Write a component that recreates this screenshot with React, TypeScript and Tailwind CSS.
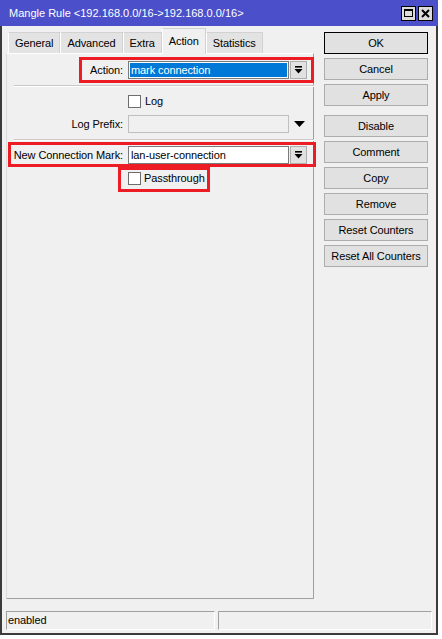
import React from 'react';

const font = "font-['Liberation_Sans',Arial,sans-serif] text-[11px] tracking-[-0.1px] text-black";

function DropBtn() {
  return (
    <div className="w-[17px] h-[18px] ml-[1px] bg-[#e1e1e1] border border-[#adadad] flex items-center justify-center">
      <svg width="9" height="8" viewBox="0 0 9 8">
        <rect x="1" y="0" width="7" height="1.6" fill="#000" />
        <path d="M0.5 3h8L4.5 7.5z" fill="#000" />
      </svg>
    </div>
  );
}

function Checkbox() {
  return <div className="w-[13px] h-[13px] bg-white border border-[#6d6d6d]" />;
}

function Label({ children }: { children: React.ReactNode }) {
  return <div className="w-[117px] pr-[1px] text-right leading-[18px] whitespace-nowrap">{children}</div>;
}

function Separator() {
  return <div className="ml-[7px] w-[300px] border-t border-[#c8c8c8] border-b border-b-white" />;
}

function RedBox({ className }: { className: string }) {
  return <span className={`absolute border-[3px] border-[#ed1c24] pointer-events-none ${className}`} />;
}

function SideButton({ label, primary }: { label: string; primary?: boolean }) {
  return (
    <button
      className={`w-[104px] h-[22px] flex items-center justify-center bg-[#e1e1e1] border ${
        primary ? 'border-black' : 'border-[#adadad]'
      }`}
    >
      {label}
    </button>
  );
}

const tabs = ['General', 'Advanced', 'Extra', 'Action', 'Statistics'];

export default function App() {
  return (
    <div className={`w-[442px] h-[639px] bg-white ${font}`}>
      <div className="w-[438px] h-[635px] flex flex-col">
        {/* title bar */}
        <div className="h-[26px] bg-[#4b4fca] flex items-center pl-[9px] pr-[5px]">
          <span className="text-white text-[11px] tracking-[0px] flex-1 whitespace-nowrap pt-[1px]">
            Mangle Rule &lt;192.168.0.0/16-&gt;192.168.0.0/16&gt;
          </span>
          <div className="flex gap-[2px]">
            <div className="w-[15px] h-[15px] bg-[#dcdcdc] border border-black flex items-center justify-center">
              <div className="w-[9px] h-[8px] border border-black border-t-2" />
            </div>
            <div className="w-[15px] h-[15px] bg-[#dcdcdc] border border-black flex items-center justify-center">
              <svg width="9" height="9" viewBox="0 0 9 9">
                <path d="M1 1l7 7M8 1L1 8" stroke="#000" strokeWidth="2" />
              </svg>
            </div>
          </div>
        </div>

        <div className="flex-1 flex flex-col bg-[#f0f0f0] border-x-2 border-b-2 border-[#3b3b3b]">
          <div className="flex pt-[2px]">
            {/* left: tabs + panel */}
            <div className="ml-[4px] w-[308px] flex flex-col">
              <div className="flex items-end h-[25px] pl-[2px]">
                {tabs.map((t) =>
                  t === 'Action' ? (
                    <div
                      key={t}
                      className="h-[26px] -mb-[1px] px-[6px] bg-[#f0f0f0] border border-b-0 border-[#d2d2d2] border-l-white flex items-start pt-[4px] relative z-10"
                    >
                      {t}
                    </div>
                  ) : (
                    <div
                      key={t}
                      className="h-[21px] px-[6px] bg-[#e3e3e3] border border-b-0 border-[#d2d2d2] border-l-white flex items-center pt-[1px]"
                    >
                      {t}
                    </div>
                  )
                )}
              </div>
              <div className="h-[546px] border border-t-white border-l-[#dadada] border-r-[#a0a0a0] border-b-[#a0a0a0] flex flex-col">
                {/* Action */}
                <div className="relative flex mt-[7px]">
                  <Label>Action:</Label>
                  <div className="ml-[4px] w-[161px] h-[18px] border border-[#7a7a7a] bg-white p-[1px]">
                    <div className="h-full bg-[#0078d7] text-white leading-[14px] pl-[1px]">mark connection</div>
                  </div>
                  <DropBtn />
                  <RedBox className="left-[72px] top-[-4px] w-[235px] h-[26px]" />
                </div>

                <div className="mt-[6px]">
                  <Separator />
                </div>

                {/* Log */}
                <div className="flex items-center mt-[8px] ml-[121px] gap-[4px]">
                  <Checkbox />
                  <span className="leading-[13px]">Log</span>
                </div>

                {/* Log Prefix */}
                <div className="flex mt-[7px]">
                  <Label>Log Prefix:</Label>
                  <div className="ml-[4px] w-[161px] h-[18px] border border-[#c0c0c0] bg-[#f0f0f0]" />
                  <div className="w-[18px] h-[18px] flex items-center justify-center ml-[1px]">
                    <svg width="11" height="6" viewBox="0 0 11 6">
                      <path d="M0 0h11L5.5 6z" fill="#000" />
                    </svg>
                  </div>
                </div>

                <div className="mt-[6px]">
                  <Separator />
                </div>

                {/* New Connection Mark */}
                <div className="relative flex mt-[5px]">
                  <Label>New Connection Mark:</Label>
                  <div className="ml-[4px] w-[161px] h-[18px] border border-[#7a7a7a] bg-white pl-[2px] leading-[16px]">
                    lan-user-connection
                  </div>
                  <DropBtn />
                  <RedBox className="left-[1px] top-[-4px] w-[308px] h-[25px]" />
                </div>

                {/* Passthrough */}
                <div className="relative flex items-center mt-[8px] ml-[121px] gap-[3px] w-[90px]">
                  <Checkbox />
                  <span className="leading-[13px]">Passthrough</span>
                  <RedBox className="left-[-10px] top-[-5px] w-[92px] h-[25px]" />
                </div>
              </div>
            </div>

            {/* right: buttons */}
            <div className="ml-[10px] mt-[4px] flex flex-col gap-[4px]">
              <SideButton label="OK" primary />
              <SideButton label="Cancel" />
              <SideButton label="Apply" />
              <div className="h-[5px]" />
              <div className="-mt-[4px] flex flex-col gap-[4px]">
                <SideButton label="Disable" />
                <SideButton label="Comment" />
                <SideButton label="Copy" />
                <SideButton label="Remove" />
                <SideButton label="Reset Counters" />
                <SideButton label="Reset All Counters" />
              </div>
            </div>
          </div>

          {/* status bar */}
          <div className="flex mt-[12px] ml-[4px] gap-[3px]">
            <div className="w-[209px] h-[19px] border border-t-[#a0a0a0] border-l-[#a0a0a0] border-r-white border-b-white pl-[1px] leading-[17px]">
              enabled
            </div>
            <div className="w-[214px] h-[19px] border border-t-[#a0a0a0] border-l-[#a0a0a0] border-r-white border-b-white" />
          </div>
        </div>
      </div>
    </div>
  );
}
